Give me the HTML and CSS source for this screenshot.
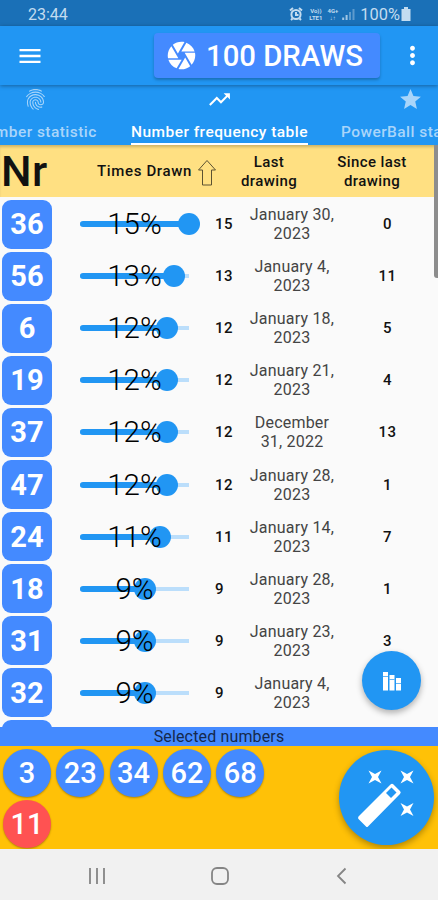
FILE: index.html
```html
<!DOCTYPE html>
<html lang="en">
<head>
    <meta charset="UTF-8">
    <meta name="viewport" content="width=device-width, initial-scale=1.0">
    <title>Number frequency table</title>
    <link rel="stylesheet" href="styles.css">
</head>
<body>
    <div class="status-bar">
        <span class="clock">23:44</span>
        <div class="status-icons">
            <svg class="alarm" viewBox="0 0 14 14"><circle cx="7" cy="7.5" r="4.6"/><path d="M1 3.5L4 1M13 3.5L10 1M7 5v3h2.5M3.5 11.5L2 13M10.5 11.5L12 13"/></svg>
            <span class="volte">Vo))<br>LTE1</span>
            <span class="network">4G+<br>↓↑</span>
            <svg class="signal" viewBox="0 0 13 12"><path d="M1.2 12V9.5M4.6 12V7"/><path class="dim" d="M8 12V4M11.5 12V1"/></svg>
            <span class="percent">100%</span>
            <svg class="battery" viewBox="0 0 10 14"><path d="M3 0h4v2h2.5v12h-9V2H3z"/></svg>
        </div>
    </div>

    <header class="app-bar">
        <button class="menu-button" aria-label="Menu">
            <svg viewBox="0 0 24 24"><path d="M3 18h18v-2H3v2zm0-5h18v-2H3v2zm0-7v2h18V6H3z"/></svg>
        </button>
        <button class="draws-button">
            <svg viewBox="0 0 24 24"><path d="M9.4 10.5l4.77-8.26C13.47 2.09 12.75 2 12 2c-2.4 0-4.6.85-6.32 2.25l3.66 6.35.06-.1zM21.54 9c-.92-2.92-3.15-5.26-6-6.34L11.88 9h9.66zm.26 1h-7.49l.29.5 4.76 8.25C20.97 17 22 14.61 22 12c0-.69-.07-1.35-.2-2zM8.54 12l-3.9-6.75C3.01 7.03 2 9.39 2 12c0 .69.07 1.35.2 2h7.49l-1.15-2zm-6.08 3c.92 2.92 3.15 5.26 6 6.34L12.12 15H2.46zm11.27 0l-3.9 6.76c.7.15 1.42.24 2.17.24 2.4 0 4.6-.85 6.32-2.25l-3.66-6.35-.93 1.6z"/></svg>
            <span>100 DRAWS</span>
        </button>
        <button class="more-button" aria-label="More">
            <svg viewBox="0 0 24 24"><path d="M12 8c1.1 0 2-.9 2-2s-.9-2-2-2-2 .9-2 2 .9 2 2 2zm0 2c-1.1 0-2 .9-2 2s.9 2 2 2 2-.9 2-2-.9-2-2-2zm0 6c-1.1 0-2 .9-2 2s.9 2 2 2 2-.9 2-2-.9-2-2-2z"/></svg>
        </button>
    </header>

    <nav class="tabs">
        <div class="tab tab-number">
            <svg viewBox="0 0 24 24"><path d="M17.81 4.47c-.08 0-.16-.02-.23-.06C15.66 3.42 14 3 12.01 3c-1.98 0-3.86.47-5.57 1.41-.24.13-.54.04-.68-.2-.13-.24-.04-.55.2-.68C7.82 2.52 9.86 2 12.01 2c2.13 0 3.99.47 6.03 1.52.25.13.34.43.21.67-.09.18-.26.28-.44.28zM3.5 9.72c-.1 0-.2-.03-.29-.09-.23-.16-.28-.47-.12-.7.99-1.4 2.25-2.5 3.75-3.27C9.98 4.04 14 4.03 17.15 5.65c1.5.77 2.76 1.86 3.75 3.25.16.22.11.54-.12.7-.23.16-.54.11-.7-.12-.9-1.26-2.04-2.25-3.39-2.94-2.87-1.47-6.54-1.47-9.4.01-1.36.7-2.5 1.7-3.4 2.96-.08.14-.23.21-.39.21zm6.25 12.07c-.13 0-.26-.05-.35-.15-.87-.87-1.34-1.43-2.01-2.64-.69-1.23-1.05-2.73-1.05-4.34 0-2.97 2.54-5.39 5.66-5.39s5.66 2.42 5.66 5.39c0 .28-.22.5-.5.5s-.5-.22-.5-.5c0-2.42-2.09-4.39-4.66-4.39-2.57 0-4.66 1.97-4.66 4.39 0 1.44.32 2.77.93 3.85.64 1.15 1.08 1.64 1.85 2.42.19.2.19.51 0 .71-.11.1-.24.15-.37.15zm7.17-1.85c-1.19 0-2.24-.3-3.1-.89-1.49-1.01-2.38-2.65-2.38-4.39 0-.28.22-.5.5-.5s.5.22.5.5c0 1.41.72 2.74 1.94 3.56.71.48 1.54.71 2.54.71.24 0 .64-.03 1.04-.1.27-.05.53.13.58.41.05.27-.13.53-.41.58-.57.11-1.07.12-1.21.12zM14.91 22c-.04 0-.09-.01-.13-.02-1.59-.44-2.63-1.03-3.72-2.1-1.4-1.39-2.17-3.24-2.17-5.22 0-1.62 1.38-2.94 3.08-2.94 1.7 0 3.08 1.32 3.08 2.94 0 1.07.93 1.94 2.08 1.94s2.08-.87 2.08-1.94c0-3.77-3.25-6.83-7.25-6.83-2.84 0-5.44 1.58-6.61 4.03-.39.81-.59 1.76-.59 2.8 0 .78.07 2.01.67 3.61.1.26-.03.55-.29.64-.26.1-.55-.04-.64-.29-.49-1.31-.73-2.61-.73-3.96 0-1.2.23-2.29.68-3.24 1.33-2.79 4.28-4.6 7.51-4.6 4.55 0 8.25 3.51 8.25 7.83 0 1.62-1.38 2.94-3.08 2.94s-3.08-1.32-3.08-2.94c0-1.07-.93-1.94-2.08-1.94s-2.08.87-2.08 1.94c0 1.71.66 3.31 1.87 4.51.95.94 1.86 1.46 3.27 1.85.27.07.42.35.35.61-.05.23-.26.38-.47.38z"/></svg>
            <span>Number statistic</span>
        </div>
        <div class="tab tab-frequency active">
            <svg viewBox="0 0 24 24"><path d="M16 6l2.29 2.29-4.88 4.88-4-4L2 16.59 3.41 18l6-6 4 4 6.3-6.29L22 12V6z"/></svg>
            <span>Number frequency table</span>
        </div>
        <div class="tab tab-powerball">
            <svg viewBox="0 0 24 24"><path d="M12 17.27L18.18 21l-1.64-7.03L22 9.24l-7.19-.61L12 2 9.19 8.63 2 9.24l5.46 4.73L5.82 21z"/></svg>
            <span>PowerBall statistic</span>
        </div>
    </nav>

    <main class="table">
        <div class="table-head">
            <span class="head-nr">Nr</span>
            <span class="head-times">Times Drawn
                <svg viewBox="0 0 20 28"><path d="M10 1.5L18.5 11H14.5V26H5.5V11H1.5z"/></svg>
            </span>
            <span class="head-last">Last drawing</span>
            <span class="head-since">Since last drawing</span>
        </div>
        <div class="rows" id="rows"></div>
        <div class="scrollbar"></div>
        <button class="fab chart-fab" aria-label="Chart">
            <svg viewBox="0 0 20 20"><path d="M1 1h5v18.500H1zM7.500 4h5v15.500h-5zM14 7h5v12.500h-5z"/><path class="cut" d="M1 5.500h5M7.500 8.500h5M14 12.500h5"/></svg>
        </button>
    </main>

    <div class="selected-title">Selected numbers</div>
    <section class="selected">
        <div class="balls">
            <span class="ball">3</span>
            <span class="ball">23</span>
            <span class="ball">34</span>
            <span class="ball">62</span>
            <span class="ball">68</span>
            <span class="ball power">11</span>
        </div>
        <button class="fab wand-fab" aria-label="Generate">
            <svg viewBox="0 0 60 60">
                <path class="wand" d="M1.500 48.500L33.500 16.500Q35 15 36.500 16.500L43 23Q44.500 24.500 43 26L11 58.500Q10 59.500 9 58.500L1.500 51Q.5 50 1.500 48.500Z"/>
                <path class="tip" d="M34.500 19.500L39.500 24.500L34 30L29 25Z"/>
                <path d="M11.500 2.500l6.500 3.500 6.500-3.500-3.500 6.500 3.500 6.500-6.500-3.500-6.500 3.500 3.500-6.500zM43.500 2.500l6.500 3.500 6.500-3.500-3.500 6.500 3.500 6.500-6.500-3.500-6.500 3.500 3.500-6.500zM43.500 35l6.500 3.500 6.500-3.500-3.500 6.500 3.500 6.500-6.500-3.500-6.500 3.500 3.500-6.500z"/>
            </svg>
        </button>
    </section>

    <footer class="nav-bar">
        <svg viewBox="0 0 18 18"><path d="M2 1v16M9 1v16M16 1v16"/></svg>
        <svg viewBox="0 0 18 18"><rect x="1" y="1" width="16" height="16" rx="5"/></svg>
        <svg viewBox="0 0 18 18"><path d="M12.500 1.500L5 9l7.500 7.500"/></svg>
    </footer>

    <script>
        const draws = [
            { nr: 36, count: 15, date: 'January 30, 2023', since: 0 },
            { nr: 56, count: 13, date: 'January 4, 2023', since: 11 },
            { nr: 6, count: 12, date: 'January 18, 2023', since: 5 },
            { nr: 19, count: 12, date: 'January 21, 2023', since: 4 },
            { nr: 37, count: 12, date: 'December 31, 2022', since: 13 },
            { nr: 47, count: 12, date: 'January 28, 2023', since: 1 },
            { nr: 24, count: 11, date: 'January 14, 2023', since: 7 },
            { nr: 18, count: 9, date: 'January 28, 2023', since: 1 },
            { nr: 31, count: 9, date: 'January 23, 2023', since: 3 },
            { nr: 32, count: 9, date: 'January 4, 2023', since: '' }
        ];
        const maxCount = 15;
        const rows = document.getElementById('rows');

        draws.forEach(draw => {
            const row = document.createElement('div');
            row.classList.add('row');
            row.innerHTML = `
                <span class="nr">${draw.nr}</span>
                <div class="slider">
                    <div class="fill" style="width: ${draw.count / maxCount * 100}%"></div>
                    <span class="slider-label">${draw.count}%</span>
                </div>
                <span class="count">${draw.count}</span>
                <span class="date">${draw.date}</span>
                <span class="since">${draw.since}</span>`;
            rows.appendChild(row);
        });

        // the next row only peeks out above the bottom bar
        const next = document.createElement('div');
        next.classList.add('row');
        next.innerHTML = '<span class="nr"></span>';
        rows.appendChild(next);
    </script>
</body>
</html>
```
FILE: styles.css
```css
* {
    margin: 0;
    padding: 0;
    box-sizing: border-box;
}

html {
    overflow: hidden;
}

body {
    display: flex;
    flex-direction: column;
    width: 438px;
    height: 900px;
    overflow: hidden;
    background-color: #fafafa;
    font-family: Roboto, sans-serif;
    color: #111;
}

button {
    border: none;
    background: none;
    color: white;
    font-family: inherit;
    cursor: pointer;
}

svg {
    display: block;
    flex-shrink: 0;
    fill: currentColor;
}

.status-bar {
    display: flex;
    justify-content: space-between;
    align-items: center;
    height: 26px;
    padding: 2px 27px 0 28px;
    background-color: #1a70b7;
    color: #c3dcf0;
    font-size: 16px;
}

.status-icons {
    display: flex;
    align-items: center;
}

.alarm {
    width: 14px;
    height: 14px;
    margin-right: 4px;
    fill: none;
    stroke: currentColor;
    stroke-width: 2;
}

.volte,
.network {
    font-size: 6px;
    line-height: 7px;
    font-weight: 700;
    text-align: center;
}

.volte {
    width: 17px;
}

.network {
    width: 13px;
    margin: 0 3px 0 2px;
}

.signal {
    width: 13px;
    height: 12px;
    margin-right: 5px;
    stroke: currentColor;
    stroke-width: 2;
    opacity: 0.8;
}

.signal .dim {
    opacity: 0.5;
}

.percent {
    font-size: 16.4px;
}

.battery {
    width: 10px;
    height: 14px;
    margin-left: 1px;
}

.app-bar {
    display: flex;
    align-items: center;
    height: 59px;
    padding: 0 11px 0 16px;
    background-color: #2196f3;
    box-shadow: 0 1px 4px rgba(0,0,0,0.35);
    z-index: 1;
}

.menu-button svg {
    width: 28px;
    height: 28px;
}

.draws-button {
    display: flex;
    align-items: center;
    gap: 8px;
    width: 226px;
    height: 45px;
    margin-left: 110px;
    padding-left: 11px;
    border-radius: 4px;
    background-color: #448aff;
    box-shadow: 0 2px 3px rgba(0,0,0,0.25);
    font-size: 29.3px;
    font-weight: 500;
    white-space: nowrap;
}

.draws-button svg {
    width: 33px;
    height: 33px;
}

.more-button {
    margin-left: auto;
}

.more-button svg {
    width: 29px;
    height: 29px;
}

.tabs {
    display: flex;
    height: 60px;
    margin-left: -43px;
    overflow: hidden;
    background-color: #2196f3;
    color: #a9d5fa;
    box-shadow: 0 1px 4px rgba(0,0,0,0.35);
    z-index: 0;
}

.tab {
    display: flex;
    flex-direction: column;
    align-items: center;
    flex-shrink: 0;
    padding-top: 2px;
    font-size: 15.5px;
    font-weight: 500;
    letter-spacing: 0.45px;
    white-space: nowrap;
}

.tab svg {
    width: 25px;
    height: 25px;
}

.tab span {
    height: 22px;
    margin-top: 11px;
    line-height: 19px;
}

.tab-number {
    width: 157px;
}

.tab-frequency {
    width: 211px;
}

.tab-powerball {
    width: 170px;
}

.tab.active {
    color: white;
}

.tab.active span {
    border-bottom: 2px solid white;
}

.table {
    position: relative;
    flex: 1;
    min-height: 0;
    overflow: hidden;
}

.table-head,
.row {
    display: grid;
    align-items: center;
}

.table-head {
    grid-template-columns: 80px 150px 78px 130px;
    height: 52px;
    background-color: #ffe082;
    box-shadow: inset 0 3px 3px -1px rgba(0,0,0,0.2);
    font-size: 15px;
    font-weight: 500;
    line-height: 19px;
    letter-spacing: 0.4px;
    text-align: center;
}

.head-nr {
    padding-left: 1px;
    font-size: 43px;
    line-height: 52px;
    text-align: left;
}

.head-times {
    display: flex;
    align-items: center;
    gap: 5px;
    padding-left: 17px;
    letter-spacing: 0.65px;
    white-space: nowrap;
}

.head-times svg {
    width: 20px;
    height: 28px;
    margin-top: 3px;
    fill: none;
    stroke: #5c5232;
    stroke-width: 1;
}

.head-last,
.head-since {
    padding-top: 2px;
}

.head-since {
    padding-right: 22px;
    padding-left: 20px;
}

.rows {
    padding-top: 1px;
}

.row {
    grid-template-columns: 80px 109px 54px 98px 93px;
    height: 52.1px;
    font-size: 15px;
}

.nr {
    display: flex;
    justify-content: center;
    align-items: center;
    width: 50px;
    height: 49px;
    margin-left: 2px;
    border-radius: 9px;
    background-color: #448aff;
    color: white;
    font-size: 29px;
    font-weight: 700;
}

.slider {
    display: grid;
    align-items: center;
    height: 22px;
    background: linear-gradient(#bbdefb, #bbdefb) center / 100% 4px no-repeat;
}

.fill,
.slider-label {
    grid-area: 1 / 1;
}

.fill {
    position: relative;
    height: 6px;
    border-radius: 3px;
    background-color: #2196f3;
}

.fill::after {
    content: "";
    position: absolute;
    top: -8px;
    right: -11px;
    width: 22px;
    height: 22px;
    border-radius: 50%;
    background-color: #2196f3;
}

.slider-label {
    font-size: 29.5px;
    font-weight: 300;
    line-height: 22px;
    text-align: center;
    color: black;
    z-index: 1;
}

.count {
    padding-left: 26px;
    font-weight: 500;
    letter-spacing: 0.5px;
}

.date {
    padding: 0 4px;
    font-size: 16px;
    line-height: 19px;
    letter-spacing: 0.2px;
    text-align: center;
    color: #444;
}

.since {
    text-align: center;
    font-weight: 500;
    letter-spacing: 0.5px;
}

/* runs up over the edge of the header */
.scrollbar {
    position: absolute;
    top: -9px;
    right: 0;
    width: 4px;
    height: 142px;
    border-radius: 3px 0 0 3px;
    background-color: #8d8d8d;
}

.fab {
    display: flex;
    justify-content: center;
    align-items: center;
    border-radius: 50%;
    background-color: #2196f3;
    box-shadow: 0 3px 6px rgba(0,0,0,0.3);
}

.chart-fab {
    position: absolute;
    right: 17px;
    bottom: 17px;
    width: 59px;
    height: 59px;
}

.chart-fab svg {
    width: 20px;
    height: 20px;
}

.chart-fab .cut {
    stroke: #2196f3;
    stroke-width: 0.7;
}

.selected-title {
    height: 19px;
    background-color: #448aff;
    font-size: 16px;
    line-height: 19px;
    letter-spacing: 0.15px;
    text-align: center;
    color: #15294d;
    z-index: 1;
}

.selected {
    display: flex;
    justify-content: space-between;
    height: 103px;
    padding: 3px 4px 0 3px;
    background-color: #ffc107;
}

.balls {
    display: flex;
    flex-wrap: wrap;
    align-content: flex-start;
    gap: 3px 5.3px;
    width: 270px;
}

.ball {
    display: flex;
    justify-content: center;
    align-items: center;
    width: 48px;
    height: 48px;
    border-radius: 50%;
    background-color: #448aff;
    box-shadow: 0 1px 2px rgba(0,0,0,0.3);
    color: white;
    font-size: 29px;
    font-weight: 500;
}

.ball.power {
    background-color: #ff5252;
}

.wand-fab {
    width: 95px;
    height: 95px;
    margin-top: 1px;
}

.wand-fab svg {
    width: 60px;
    height: 60px;
}

.wand-fab .tip {
    fill: #2196f3;
}

.nav-bar {
    display: flex;
    justify-content: space-between;
    align-items: center;
    height: 51px;
    padding: 3px 87px 0 88px;
    background-color: #f1f1f1;
    color: #858585;
}

.nav-bar svg {
    width: 18px;
    height: 18px;
    fill: none;
    stroke: currentColor;
    stroke-width: 1.8;
}
```
